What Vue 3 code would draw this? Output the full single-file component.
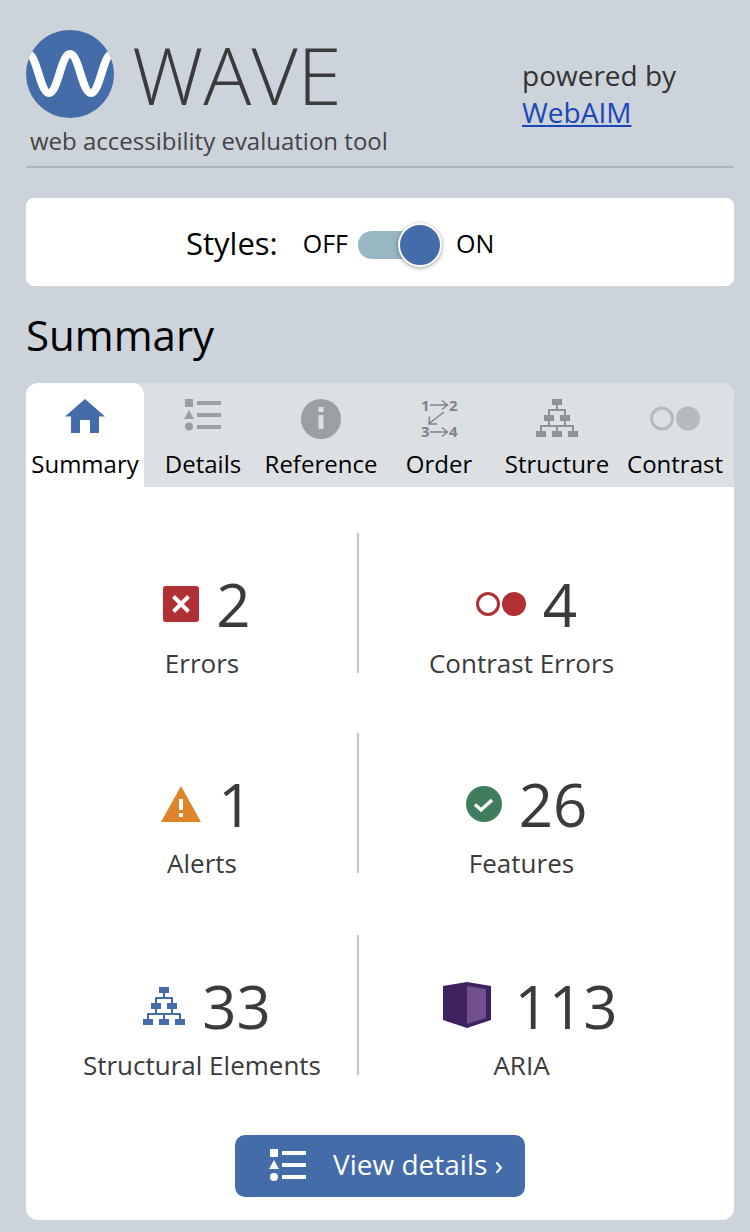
<template>
  <div class="page">
    <header class="head">
      <div class="brand">
        <div class="logo-row">
          <svg class="logo" width="88" height="88" viewBox="0 0 88 88">
            <defs>
              <clipPath id="logo-clip"><circle cx="44" cy="44" r="44" /></clipPath>
            </defs>
            <circle cx="44" cy="44" r="44" fill="#446ca9" />
            <path clip-path="url(#logo-clip)" d="M2 24 C11 24 14 63 23 63 S35 24 44 24 S56 63 65 63 S77 24 86 24" fill="none" stroke="#fff" stroke-width="8" />
          </svg>
          <span class="wordmark">WAVE</span>
        </div>
        <div class="tagline">web accessibility evaluation tool</div>
      </div>
      <div class="powered">
        <div>powered by</div>
        <a class="link">WebAIM</a>
      </div>
    </header>

    <section class="styles-card">
      <span class="styles-label">Styles:</span>
      <span class="state off">OFF</span>
      <span class="track"><span class="knob"></span></span>
      <span class="state">ON</span>
    </section>

    <h1 class="title">Summary</h1>

    <section class="panel">
      <nav class="tabs">
        <div v-for="tab in tabs" :key="tab.name" class="tab" :class="{ active: tab.name === 'Summary' }">
          <svg class="tab-icon" width="60" height="52" viewBox="0 -6 60 52">
            <g v-if="tab.name === 'Summary'" fill="#446ca9">
              <path d="M30 0 L50 17.500 L44 17.500 L44 34 L35 34 L35 21 L25 21 L25 34 L16 34 L16 17.500 L10 17.500 Z" />
            </g>
            <g v-if="tab.name === 'Details'" fill="#9b9fa2">
              <rect x="12" y="0" width="8" height="8" />
              <path d="M16 11 L21 20 L11 20 Z" />
              <circle cx="16" cy="27.500" r="4" />
              <rect x="24" y="2" width="24" height="4" />
              <rect x="24" y="14" width="24" height="4" />
              <rect x="24" y="26" width="24" height="4" />
            </g>
            <g v-if="tab.name === 'Reference'">
              <circle cx="30" cy="20" r="20" fill="#9b9fa2" />
              <rect x="27.500" y="8" width="5" height="5" fill="#dce0e3" />
              <rect x="27.500" y="16" width="5" height="14" fill="#dce0e3" />
            </g>
            <g v-if="tab.name === 'Order'" fill="none" stroke="#7f8386" stroke-width="1.400">
              <text x="12" y="12" class="order-num">1</text>
              <text x="40" y="12" class="order-num">2</text>
              <text x="12" y="38" class="order-num">3</text>
              <text x="40" y="38" class="order-num">4</text>
              <path d="M21 6 H38 M33 1.500 L38.500 6 L33 10.500" />
              <path d="M35 13 L20 24.500 M20.500 17.500 L20 25 L28 25" />
              <path d="M21 33 H38 M33 28.500 L38.500 33 L33 37.500" />
            </g>
            <use v-if="tab.name === 'Structure'" href="#tree" x="9" y="0" style="color: #8f9396" />
            <g v-if="tab.name === 'Contrast'" fill="#b7babc">
              <circle cx="17" cy="19.500" r="10.500" fill="none" stroke="#b7babc" stroke-width="3" />
              <circle cx="43" cy="19.500" r="12" />
            </g>
          </svg>
          <span class="tab-name">{{ tab.name }}</span>
        </div>
      </nav>

      <svg width="0" height="0" class="defs">
        <symbol id="tree" viewBox="0 0 42 38" width="42" height="38">
          <g fill="currentColor">
            <rect x="16" y="0" width="10" height="6" />
            <rect x="8" y="16" width="10" height="6" />
            <rect x="24" y="16" width="10" height="6" />
            <rect x="0" y="32" width="10" height="6" />
            <rect x="16" y="32" width="10" height="6" />
            <rect x="32" y="32" width="10" height="6" />
            <path d="M20 6 H22 V10 H30 V16 H28 V12 H14 V16 H12 V10 H20 Z" />
            <path d="M12 22 H14 V26 H28 V22 H30 V26 H38 V32 H36 V28 H22 V32 H20 V28 H6 V32 H4 V26 H12 Z" />
          </g>
        </symbol>
      </svg>

      <div class="stats">
        <div v-for="stat in stats" :key="stat.label" class="stat">
          <div class="stat-top">
            <svg v-if="stat.label === 'Errors'" width="36" height="36" viewBox="0 0 36 36">
              <rect width="36" height="36" rx="3" fill="#b03034" />
              <path d="M10.500 10.500 L25.500 25.500 M25.500 10.500 L10.500 25.500" stroke="#fff" stroke-width="4" />
            </svg>
            <svg v-if="stat.label === 'Contrast Errors'" width="50" height="24" viewBox="0 0 50 24">
              <circle cx="12" cy="12" r="10.500" fill="none" stroke="#b03034" stroke-width="3" />
              <circle cx="38" cy="12" r="12" fill="#b03034" />
            </svg>
            <svg v-if="stat.label === 'Alerts'" width="40" height="36" viewBox="0 0 40 36">
              <path d="M20 0 L40 36 H0 Z" fill="#e0842c" />
              <rect x="18" y="13" width="4" height="11" fill="#fff" />
              <rect x="18" y="27" width="4" height="4" fill="#fff" />
            </svg>
            <svg v-if="stat.label === 'Features'" width="36" height="36" viewBox="0 0 36 36">
              <circle cx="18" cy="18" r="18" fill="#3f7d5d" />
              <path d="M9 18.500 L15 24 L26 14" fill="none" stroke="#fff" stroke-width="3.500" />
            </svg>
            <svg v-if="stat.label === 'Structural Elements'" width="42" height="38" viewBox="0 0 42 38" style="color: #446ca9">
              <use href="#tree" />
            </svg>
            <svg v-if="stat.label === 'ARIA'" class="aria-icon" width="48" height="46" viewBox="0 0 48 46">
              <path d="M0 4 L24 0 L48 4 V38 L24 46 L0 38 Z" fill="#3f2160" />
              <path d="M24 4 L43 7 V36 L24 42 Z" fill="#72508c" />
            </svg>
            <span class="count">{{ stat.count }}</span>
          </div>
          <div class="stat-label">{{ stat.label }}</div>
        </div>
      </div>

      <div class="actions">
        <a class="details-btn">
          <svg width="38" height="32" viewBox="0 0 38 32">
            <g fill="#fff">
              <rect x="1" y="0" width="8" height="8" />
              <path d="M5 11 L10 20 L0 20 Z" />
              <circle cx="5" cy="28" r="4" />
              <rect x="13" y="2" width="24" height="4" />
              <rect x="13" y="14" width="24" height="4" />
              <rect x="13" y="26" width="24" height="4" />
            </g>
          </svg>
          <span class="btn-text">View details ›</span>
        </a>
      </div>
    </section>
  </div>
</template>

<script setup>
const tabs = [
  { name: 'Summary' },
  { name: 'Details' },
  { name: 'Reference' },
  { name: 'Order' },
  { name: 'Structure' },
  { name: 'Contrast' }
]

const stats = [
  { label: 'Errors', count: 2 },
  { label: 'Contrast Errors', count: 4 },
  { label: 'Alerts', count: 1 },
  { label: 'Features', count: 26 },
  { label: 'Structural Elements', count: 33 },
  { label: 'ARIA', count: 113 }
]
</script>

<style>
html,
body {
  background: #ccd3da;
}
</style>

<style scoped>
.page {
  box-sizing: border-box;
  width: 750px;
  height: 1232px;
  padding: 30px 16px 12px 26px;
  background: #ccd3da;
  font-family: "Open Sans", "Noto Sans", sans-serif;
  color: #000;
  overflow: hidden;
}

.head {
  display: flex;
  justify-content: space-between;
  height: 136px;
  border-bottom: 2px solid #b0b3bb;
}

.logo-row {
  display: flex;
  align-items: center;
  gap: 18px;
  height: 88px;
}

.wordmark {
  font-size: 80px;
  font-weight: 300;
  line-height: 88px;
  color: #3b3b3b;
}

.tagline {
  margin: 6px 0 0 4px;
  font-size: 24px;
  line-height: 34px;
  color: #444;
}

.powered {
  width: 212px;
  padding-top: 27px;
  font-size: 28px;
  line-height: 37px;
  color: #333;
}

.link {
  color: #1a47b8;
  text-decoration: underline;
}

.styles-card {
  box-sizing: border-box;
  display: flex;
  align-items: center;
  height: 88px;
  margin-top: 30px;
  padding: 2px 0 0 160px;
  background: #fff;
  border-radius: 8px;
}

.styles-label {
  margin-right: 25px;
  font-size: 31px;
}

.state {
  font-size: 25px;
}

.state.off {
  margin-right: 10px;
}

.track {
  position: relative;
  width: 62px;
  height: 28px;
  margin: 4px 36px 0 0;
  border-radius: 14px;
  background: #97b8c2;
}

.knob {
  position: absolute;
  top: -8px;
  right: -22px;
  box-sizing: border-box;
  width: 44px;
  height: 44px;
  border: 2px solid #fff;
  border-radius: 50%;
  background: #446ca9;
  box-shadow: 0 1px 4px rgba(0, 0, 0, 0.4);
}

.title {
  margin: 22px 0 21px;
  font-size: 42px;
  font-weight: 400;
  line-height: 54px;
}

.panel {
  height: 837px;
  background: #fff;
  border-radius: 12px;
  overflow: hidden;
}

.tabs {
  display: flex;
  height: 104px;
  background: #dce0e3;
}

.tab {
  display: flex;
  flex-direction: column;
  align-items: center;
  width: 118px;
  padding-top: 10px;
  box-sizing: border-box;
}

.tab.active {
  background: #fff;
  border-radius: 12px 12px 0 0;
}

.tab-icon {
  display: block;
  flex: none;
}

.tab-name {
  margin-top: 2px;
  font-size: 24px;
  line-height: 34px;
  white-space: nowrap;
}

.order-num {
  font-size: 15px;
  font-weight: 700;
  fill: #7f8386;
  stroke: none;
  font-family: "Open Sans", sans-serif;
}

.defs {
  position: absolute;
}

.stats {
  display: grid;
  grid-template-columns: 310px 327px;
  grid-template-rows: 140px 142px 140px;
  row-gap: 60px;
  margin: 46px 48px 0 23px;
}

.stat {
  box-sizing: border-box;
  display: flex;
  flex-direction: column;
  align-items: center;
  height: 140px;
  padding-right: 2px;
}

.stat:nth-child(odd) {
  border-right: 2px solid #c4c4c4;
}

.stat-top {
  display: flex;
  align-items: center;
  gap: 17px;
  height: 82px;
  margin-top: 30px;
  padding-left: 10px;
}

.aria-icon {
  margin: -2px 7px 0;
}

.count {
  font-size: 60px;
  line-height: 82px;
  color: #3b3b3b;
}

.stat-label {
  font-size: 26px;
  line-height: 36px;
  color: #3b3b3b;
  white-space: nowrap;
}

.actions {
  display: flex;
  justify-content: center;
  margin-top: 60px;
}

.details-btn {
  display: flex;
  align-items: center;
  gap: 26px;
  box-sizing: border-box;
  width: 290px;
  height: 62px;
  padding: 0 0 2px 34px;
  border-radius: 10px;
  background: #446ca9;
  color: #fff;
  font-size: 28px;
}

.btn-text {
  margin-bottom: 2px;
}
</style>
